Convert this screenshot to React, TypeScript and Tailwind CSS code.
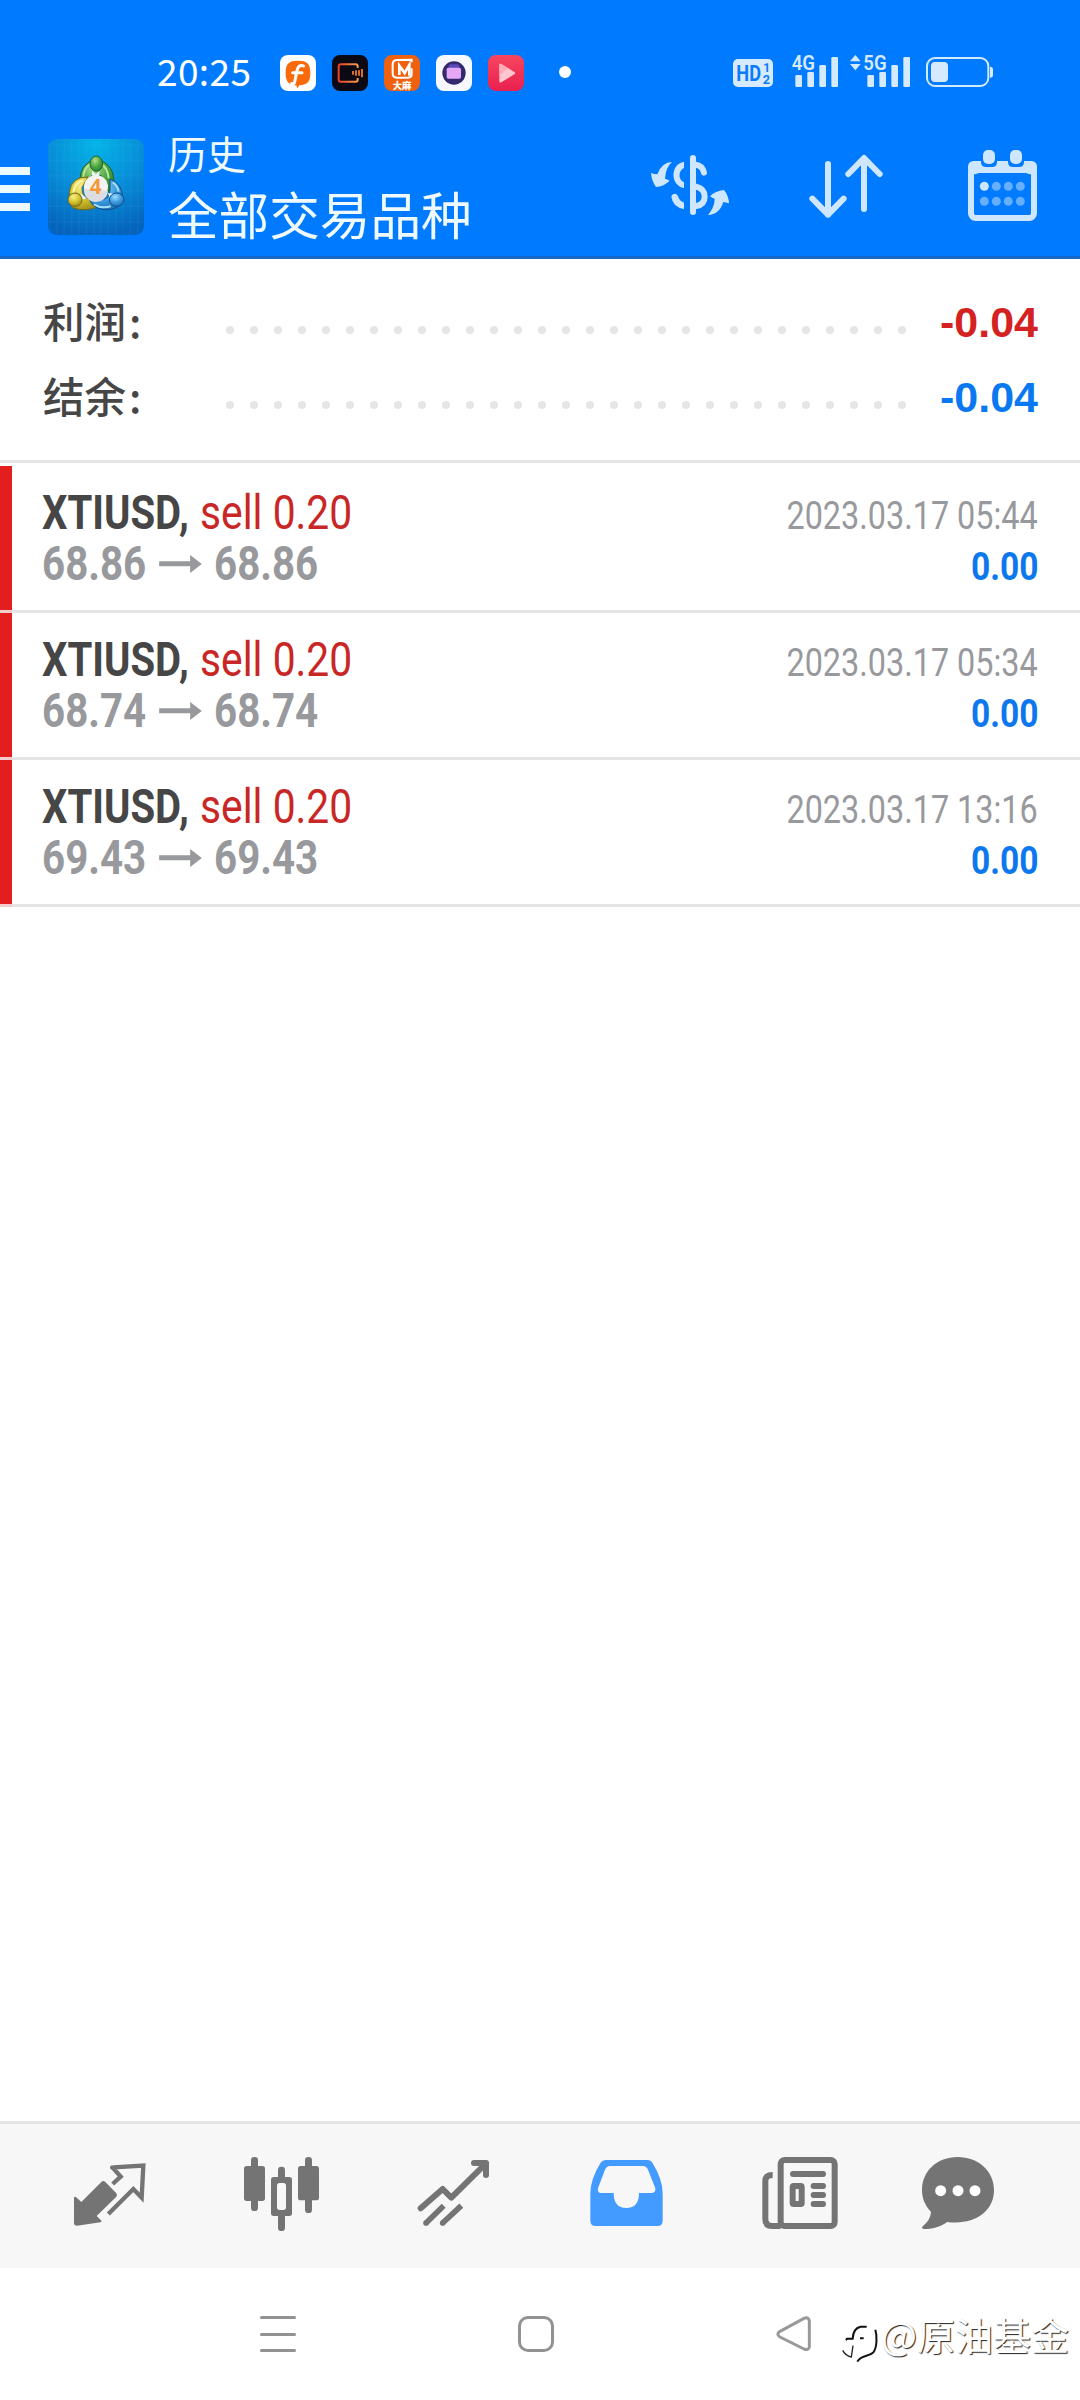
import type { ReactNode } from 'react'

const CJK = "font-['Noto_Sans_CJK_SC',sans-serif]"

const totals = [
  { label: '利润', value: '-0.04', color: 'text-[#d42222]' },
  { label: '结余', value: '-0.04', color: 'text-[#0a78f0]' },
]

const deals = [
  { symbol: 'XTIUSD,', side: 'sell 0.20', open: '68.86', close: '68.86', time: '2023.03.17 05:44', profit: '0.00' },
  { symbol: 'XTIUSD,', side: 'sell 0.20', open: '68.74', close: '68.74', time: '2023.03.17 05:34', profit: '0.00' },
  { symbol: 'XTIUSD,', side: 'sell 0.20', open: '69.43', close: '69.43', time: '2023.03.17 13:16', profit: '0.00' },
]

// Icons are drawn at three units per pixel
function Icon({ box, className, children }: { box: string; className: string; children: ReactNode }) {
  return (
    <svg viewBox={box} className={`shrink-0 ${className}`} fill="none">
      {children}
    </svg>
  )
}

function AppBadges() {
  return (
    <div className="flex gap-4">
      <Icon box="0 0 108 108" className="size-9">
        <rect width="108" height="108" rx="24" fill="#fff" />
        <path d="M54 17C82 17 91 26 91 54c0 26-8 35-33 37l-6 9-3-9C25 90 17 80 17 54 17 26 26 17 54 17Z" fill="#fa6a0a" />
        <path d="M71 33c-11-5-18 2-20 14l-7 34c-1 5-5 6-9 4M38 53h28" stroke="#fff" strokeWidth="9" strokeLinecap="round" />
        <path d="m51 80 7 0-3 15-4 3Z" fill="#fa6a0a" />
      </Icon>
      <Icon box="0 0 108 108" className="size-9">
        <defs>
          <linearGradient id="cam" x1="0" x2="1">
            <stop stopColor="#e8402b" />
            <stop offset="1" stopColor="#f59a4a" />
          </linearGradient>
        </defs>
        <rect width="108" height="108" rx="24" fill="#0b0a14" />
        <path d="M77 39V34q0-6-6-6H26q-6 0-6 6v40q0 6 6 6h45q6 0 6-6v-5" stroke="url(#cam)" strokeWidth="6" />
        <path d="M63 48v11M72 46v16M81 46v16M90 42v25" stroke="#d86c30" strokeWidth="6" />
      </Icon>
      <Icon box="0 0 108 108" className="size-9">
        <rect width="108" height="108" rx="24" fill="#f0610f" />
        <path d="M83 22V14L38 15q-12 1-12 13v27q0 13 12 13h34q11 0 11-10V40" stroke="#fff" strokeWidth="6" />
        <path d="M46 60V32l16 22 14-24v32" stroke="#fff" strokeWidth="8" />
        <text x="54" y="102" fontSize="26" fontWeight="900" textAnchor="middle" fill="#fff" fontFamily="Noto Sans CJK SC" textLength="56" lengthAdjust="spacingAndGlyphs">大麻</text>
      </Icon>
      <Icon box="0 0 108 108" className="size-9">
        <rect width="108" height="108" rx="24" fill="#f8f9ff" />
        <circle cx="54" cy="54" r="35" fill="#33296f" />
        <rect x="38" y="28" width="32" height="20" rx="6" fill="#5b4bb8" />
        <rect x="32" y="38" width="43" height="33" rx="5" fill="#e5a8f7" />
      </Icon>
      <Icon box="0 0 108 108" className="size-9">
        <defs>
          <linearGradient id="play" x1="0" y1="0" x2="0" y2="1">
            <stop stopColor="#f8455f" />
            <stop offset="1" stopColor="#e8204f" />
          </linearGradient>
        </defs>
        <rect width="108" height="108" rx="24" fill="url(#play)" />
        <path d="M34 30q0-6 6-3l39 24q5 4 0 7L40 82q-6 3-6-4Z" fill="#ffc6cf" />
        <path d="M34 30q0-6 6-3l20 13-26 22Z" fill="#ffaab6" />
      </Icon>
    </div>
  )
}

function StatusIcons() {
  return (
    <div className="flex pl-[161px] text-[#d6eaff]">
      <Icon box="66 36 126 108" className="w-[42px] h-9">
        <rect x="69" y="57" width="120" height="84" rx="15" fill="currentColor" />
        <g fill="#0a7bfa" fontFamily="Roboto" fontWeight="700">
          <text x="79" y="123" fontSize="66" textLength="74" lengthAdjust="spacingAndGlyphs">HD</text>
          <text x="160" y="96" fontSize="36">1</text>
          <text x="158" y="131" fontSize="38">2</text>
        </g>
      </Icon>
      <Icon box="243 36 141 108" className="ml-[17px] w-[47px] h-9">
        <text x="245" y="90" fontSize="61" fontWeight="600" fontFamily="Roboto" fill="currentColor" textLength="70" lengthAdjust="spacingAndGlyphs">4G</text>
        <g fill="currentColor">
          <rect x="256" y="105" width="20" height="36" rx="4" />
          <rect x="292" y="96" width="20" height="45" rx="4" />
          <rect x="328" y="75" width="20" height="66" rx="4" />
          <rect x="364" y="51" width="20" height="90" rx="4" />
        </g>
      </Icon>
      <Icon box="417 36 186 108" className="ml-[11px] w-[62px] h-9">
        <path d="m420 64 16-19 16 19ZM420 72l16 19 16-19Z" fill="currentColor" />
        <text x="460" y="90" fontSize="61" fontWeight="600" fontFamily="Roboto" fill="currentColor" textLength="70" lengthAdjust="spacingAndGlyphs">5G</text>
        <g fill="currentColor">
          <rect x="472" y="105" width="20" height="36" rx="4" />
          <rect x="508" y="96" width="20" height="45" rx="4" />
          <rect x="544" y="75" width="20" height="66" rx="4" />
          <rect x="580" y="51" width="20" height="90" rx="4" />
        </g>
      </Icon>
      <Icon box="645 36 207 108" className="ml-[14px] w-[69px] h-9">
        <rect x="651" y="54" width="184" height="84" rx="24" stroke="currentColor" strokeWidth="6" />
        <rect x="663" y="66" width="51" height="60" rx="12" fill="currentColor" />
        <path d="M840 80q9 0 9 8v17q0 8-9 8Z" fill="currentColor" />
      </Icon>
    </div>
  )
}

function Logo() {
  return (
    <svg viewBox="0 0 288 288" className="ml-[18px] mt-[19px] size-24 shrink-0">
      <defs>
        <radialGradient id="bg" cx="0.5" cy="0.05" r="0.95">
          <stop stopColor="#04b4e8" />
          <stop offset="0.55" stopColor="#078bd6" />
          <stop offset="1" stopColor="#0564bd" />
        </radialGradient>
        <radialGradient id="green" cx="0.4" cy="0.3" r="0.8">
          <stop stopColor="#b4e08c" />
          <stop offset="0.5" stopColor="#4fa843" />
          <stop offset="1" stopColor="#257a2d" />
        </radialGradient>
        <radialGradient id="yellow" cx="0.4" cy="0.3" r="0.8">
          <stop stopColor="#f6ef8e" />
          <stop offset="0.5" stopColor="#d6c42c" />
          <stop offset="1" stopColor="#94831a" />
        </radialGradient>
        <radialGradient id="blue" cx="0.4" cy="0.3" r="0.8">
          <stop stopColor="#9cdcfb" />
          <stop offset="0.5" stopColor="#3d9ce0" />
          <stop offset="1" stopColor="#1564ad" />
        </radialGradient>
        <pattern id="grid" width="22" height="46" patternUnits="userSpaceOnUse">
          <path d="M5 0V46M0 18H22" stroke="#5fd0f5" strokeOpacity="0.14" strokeWidth="2" />
        </pattern>
      </defs>
      <rect width="288" height="288" rx="26" fill="url(#bg)" />
      <rect width="288" height="288" rx="26" fill="url(#grid)" />
      <path d="M96 120q0-44 48-60 50 12 54 62-2 24-20 40L160 110q-20-10-38 8Z" fill="url(#green)" stroke="#1d6430" strokeWidth="3" />
      <path d="M106 118q0-32 24-44M182 118q-2-30-24-44" stroke="#b9e59c" strokeWidth="6" fill="none" />
      <path d="M120 114q-50-2-56 46-2 34 10 46 34 14 76-2l-20-22q-30-4-28-36Z" fill="url(#yellow)" stroke="#756617" strokeWidth="3" />
      <path d="M76 166q0-34 30-42" stroke="#faf5ac" strokeWidth="6" fill="none" />
      <path d="M186 120q36 14 38 52-2 36-40 40-46 4-62-34l34 4q30 0 30-28Z" fill="url(#blue)" stroke="#124f8e" strokeWidth="3" />
      <path d="M138 196q22 14 50 6M212 158q-4-20-18-28" stroke="#a5e0fa" strokeWidth="6" fill="none" />
      <path d="m132 96 12 10 10-10v14h-22ZM100 164l-6 20 22-6ZM180 162l6 18 10-16Z" fill="#e9f7ff" />
      <ellipse cx="145" cy="74" rx="19" ry="23" fill="url(#green)" stroke="#1d6430" strokeWidth="3" />
      <ellipse cx="81" cy="182" rx="21" ry="20" fill="url(#yellow)" stroke="#756617" strokeWidth="3" />
      <ellipse cx="206" cy="182" rx="22" ry="20" fill="url(#blue)" stroke="#124f8e" strokeWidth="3" />
      <circle cx="144" cy="144" r="36" fill="#f3f3f4" />
      <path d="M108 150a36 36 0 0 0 72 6Z" fill="#dcdde0" />
      <text x="143" y="165" fontSize="62" fontWeight="700" fontFamily="Open Sans" textAnchor="middle" fill="#f59a3c">4</text>
    </svg>
  )
}

function Header() {
  return (
    <header className="h-[259px] bg-[#007aff] border-b-[3px] border-[#1568c4] text-[#effaff]">
      <div className="flex h-[120px] items-start pt-[52px] pl-[157px]">
        <span className={`${CJK} mt-px w-[123px] text-[37px] leading-[34px] tracking-[0.4px] text-white`}>20:25</span>
        <div className="pt-[3px]">
          <AppBadges />
        </div>
        <span className="ml-[35px] mt-[14px] size-3 rounded-full bg-white" />
        <StatusIcons />
      </div>
      <div className="flex items-start">
        <div className="mt-[47px] flex w-[30px] flex-col gap-[10px]">
          <span className="h-2 bg-[#ecf9ff]" />
          <span className="h-2 bg-[#ecf9ff]" />
          <span className="h-2 bg-[#ecf9ff]" />
        </div>
        <Logo />
        <div className={`${CJK} ml-6 mt-[2px] w-[481px]`}>
          <p className="text-[39px] leading-[60px]">历史</p>
          <h1 className="mt-px text-[50.6px] leading-[60px]">全部交易品种</h1>
        </div>
        <div className="mt-[25px] flex text-[#cfe6ff]">
          <Icon box="87 45 246 240" className="w-[82px] h-20">
            <path d="M219 84V246" stroke="currentColor" strokeWidth="18" strokeLinecap="round" />
            <path d="M192 95C150 102 150 166 192 174V157C174 150 174 122 192 114ZM154 200q2-9 11-9 7 0 9 8 4 14 18 19v19q-34-6-38-37Z" fill="currentColor" />
            <path d="M228 104q20 3 24 24M228 170q26 6 26 30t-26 28" stroke="currentColor" strokeWidth="18" strokeLinecap="round" />
            <path d="M156 96q-30 0-44 37-10 0-19-4 2 24 15 42 24-2 41-19-8-4-14-6 2-34 21-50ZM264 255q20-24 20-49-8-2-14-7 16-17 42-19 14 17 15 40-10-3-17-4-12 38-46 39Z" fill="currentColor" />
          </Icon>
          <Icon box="561 45 237 240" className="ml-[76px] w-[79px] h-20">
            <path d="M624 102V254M577 206l47 48 47-48M732 237V85M685 132l47-48 47 48" stroke="currentColor" strokeWidth="18" strokeLinecap="round" strokeLinejoin="round" />
          </Icon>
          <Icon box="1038 45 219 240" className="ml-[80px] w-[73px] h-20">
            <rect x="1053" y="111" width="189" height="153" rx="14" stroke="currentColor" strokeWidth="18" />
            <rect x="1044" y="93" width="207" height="40" rx="16" fill="currentColor" />
            <rect x="1062" y="129" width="171" height="126" rx="16" fill="#007aff" />
            <path d="M1083 88h48v8q0 15-15 15h-18q-15 0-15-15ZM1164 88h48v8q0 15-15 15h-18q-15 0-15-15Z" fill="#007aff" />
            <rect x="1089" y="60" width="36" height="42" rx="15" fill="currentColor" />
            <rect x="1170" y="60" width="36" height="42" rx="15" fill="currentColor" />
            <circle cx="1093" cy="169" r="13.5" fill="currentColor" />
            <g fill="#66afff">
              <circle cx="1129" cy="169" r="13.5" />
              <circle cx="1165" cy="169" r="13.5" />
              <circle cx="1201" cy="169" r="13.5" />
              <circle cx="1093" cy="214" r="13.5" />
              <circle cx="1129" cy="214" r="13.5" />
              <circle cx="1165" cy="214" r="13.5" />
              <circle cx="1201" cy="214" r="13.5" />
            </g>
          </Icon>
        </div>
      </div>
    </header>
  )
}

function Totals() {
  return (
    <section className="h-[204px] border-b-[3px] border-[#e5e5e5] pt-6">
      {totals.map((row) => (
        <div key={row.label} className="flex h-[75px] items-center pl-[43px] pr-[42px]">
          <span className={`${CJK} w-[183px] text-[41.5px] leading-[73px] font-medium text-[#464646]`}>
            {row.label}
            <span className="ml-[3px]">:</span>
          </span>
          <div className="mt-[18px] flex w-[680px] justify-between">
            {Array.from({ length: 29 }, (_, i) => (
              <span key={i} className="size-2 rounded-full bg-[#e5e5e5]" />
            ))}
          </div>
          <span className={`${row.color} mt-[3px] flex-1 text-right font-['Liberation_Sans',sans-serif] text-[43px] leading-[70px] font-bold`}>
            {row.value}
          </span>
        </div>
      ))}
    </section>
  )
}

function DealRow({ deal }: { deal: (typeof deals)[number] }) {
  return (
    <li>
      <div className="flex h-36">
        <div className="w-3 bg-[#e31e1e]" />
        <div className="ml-[30px] flex-1 pt-[21px] text-5xl">
          <div className="flex leading-[51px]">
            <span className="w-[158px] origin-left scale-x-[0.835] font-bold text-[#464646]">{deal.symbol}</span>
            <span className="origin-left scale-x-[0.85] whitespace-nowrap text-[#c92626]">{deal.side}</span>
          </div>
          <div className="flex items-center font-bold leading-[51px] text-[#98999d]">
            <span className="w-[117px] origin-left scale-x-[0.84]">{deal.open}</span>
            <svg viewBox="0 0 128 54" className="h-[18px] w-[43px] shrink-0">
              <path d="M0 19H93V0L128 27 93 54V34H0Z" fill="currentColor" />
            </svg>
            <span className="ml-[12px] origin-left scale-x-[0.84]">{deal.close}</span>
          </div>
        </div>
        <div className="flex flex-col items-end pr-[42px] pt-[25px] text-[39px] leading-[51px]">
          <span className="origin-right scale-x-[0.83] whitespace-nowrap text-[#98999d]">{deal.time}</span>
          <span className="origin-right scale-x-[0.86] font-bold text-[#0d78ee]">{deal.profit}</span>
        </div>
      </div>
      <div className="flex h-[3px] bg-[#e5e5e5]">
        <div className="w-3 bg-[#f3cdcd]" />
      </div>
    </li>
  )
}

function TabBar() {
  return (
    <nav className="flex h-[147px] border-t-[3px] border-[#e5e5e5] bg-[#f7f7f7] pl-[72px] pt-[30px] text-[#747474]">
      <Icon box="96 132 228 240" className="w-[76px] h-20">
        <path d="M102 263q2-6 8 0l14 13 60-60q6-6 12 0l33 34q4 5 0 10l-59 58 12 12q6 5-1 7l-70 10q-9 0-9-9Z" fill="currentColor" />
        <path d="M218 222l24-22-24-27q-4-1 2-1l90-5-5 96-25-26-75 75" stroke="currentColor" strokeWidth="13" />
      </Icon>
      <Icon box="606 132 237 240" className="ml-[94px] w-[79px] h-20">
        <g fill="currentColor">
          <rect x="612" y="168" width="63" height="105" rx="8" />
          <rect x="633" y="141" width="21" height="162" rx="10" />
          <rect x="774" y="168" width="63" height="103" rx="8" />
          <rect x="795" y="141" width="21" height="168" rx="10" />
          <rect x="693" y="201" width="63" height="117" rx="8" />
          <rect x="714" y="170" width="21" height="193" rx="10" />
        </g>
        <rect x="711" y="219" width="27" height="81" rx="8" fill="#f7f7f7" />
      </Icon>
      <Icon box="1128 132 225 240" className="ml-[95px] w-[75px] h-20">
        <path d="m1142 295 66-58 26 26 104-103M1302 159h36v36" stroke="currentColor" strokeWidth="18" strokeLinecap="round" strokeLinejoin="round" />
        <path d="m1158 339 53-52M1208 339l56-52" stroke="currentColor" strokeWidth="17" />
        <circle cx="1158" cy="339" r="8.5" fill="currentColor" />
        <circle cx="1208" cy="339" r="8.5" fill="currentColor" />
      </Icon>
      <Icon box="84 132 231 240" className="ml-[97px] w-[77px] h-20">
        <path
          d="M138 150H262q10 0 16 10 30 48 30 92v80q0 16-16 16H107q-16 0-16-16v-80q0-44 30-92 7-10 17-10ZM150 168q-10 0-15 11L114 235q-3 14 10 14h37q0 45 38 45t38-45h37q14 0 12-14L264 179q-5-11-15-11Z"
          fill="#449bff"
          fillRule="evenodd"
        />
      </Icon>
      <Icon box="600 132 240 240" className="ml-[95px] w-20 h-20">
        <rect x="662" y="150" width="162" height="198" rx="12" stroke="currentColor" strokeWidth="18" />
        <path d="M638 195q-22 0-22 18v113q0 22 20 22h26" stroke="currentColor" strokeWidth="18" />
        <path d="M699 192h90M761 228h28M761 255h28M761 282h28" stroke="currentColor" strokeWidth="18" strokeLinecap="round" />
        <rect x="698" y="228" width="27" height="54" rx="3" stroke="currentColor" strokeWidth="18" />
      </Icon>
      <Icon box="1080 132 228 240" className="ml-20 w-[76px] h-20">
        <path d="M1193 141c62 0 109 42 109 100 0 66-62 105-140 95-22 16-46 21-70 21q-8-2-5-7 25-20 26-44c-17-18-27-40-27-65 0-58 45-100 107-100Z" fill="currentColor" />
        <g fill="#fff">
          <circle cx="1142" cy="242" r="16.5" />
          <circle cx="1194" cy="242" r="16.5" />
          <circle cx="1245" cy="242" r="16.5" />
        </g>
      </Icon>
    </nav>
  )
}

function SystemNav() {
  return (
    <footer className="flex h-[132px] items-start pl-[260px] pt-12 text-[#929292]">
      <div className="flex h-9 w-9 flex-col justify-between">
        <span className="h-[3px] rounded-full bg-current" />
        <span className="h-[3px] rounded-full bg-current" />
        <span className="h-[3px] rounded-full bg-current" />
      </div>
      <div className="ml-[222px] size-9 rounded-[10px] border-[3px] border-current" />
      <Icon box="0 0 108 108" className="ml-[222px] size-9">
        <path d="M12 46 84 7q14-5 16 8v78q-2 11-16 6L12 63q-13-8 0-17Z" stroke="#999" strokeWidth="9" strokeLinejoin="round" />
      </Icon>
      {/* Watermark: white on white, only its shadow shows */}
      <div className="ml-[30px] flex items-start">
        <svg viewBox="0 0 114 120" className="mt-[9px] h-10 w-[38px]" fill="none">
          <path d="M12 46l3-5h17q2-32 24-36h18M54 40h11" stroke="#111" strokeWidth="6" />
          <path d="M100 14c6 20 5 54-6 68-12 13-38 8-48 28" stroke="#111" strokeWidth="6" />
          <path d="M2 76q8 16 26 20l5-34" stroke="#222" strokeWidth="4" />
        </svg>
        <span className={`${CJK} ml-px mt-[-4px] whitespace-nowrap text-[38px] leading-[44px] text-white [text-shadow:1px_1px_1px_#222]`}>
          @原油基金
        </span>
      </div>
    </footer>
  )
}

export default function App() {
  return (
    <div className="flex h-[2400px] w-[1080px] flex-col overflow-hidden bg-white font-['Roboto',sans-serif]">
      <Header />
      <Totals />
      <ul className="flex-1 pt-[3px]">
        {deals.map((deal) => (
          <DealRow key={deal.time} deal={deal} />
        ))}
      </ul>
      <TabBar />
      <SystemNav />
    </div>
  )
}
